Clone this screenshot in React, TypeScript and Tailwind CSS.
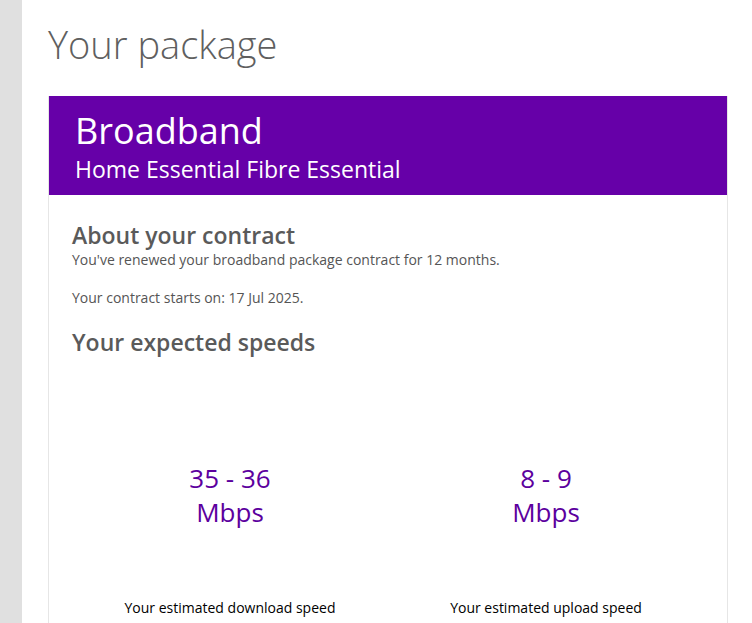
const speeds = [
  { range: "35 - 36", label: "Your estimated download speed" },
  { range: "8 - 9", label: "Your estimated upload speed" },
];

const App = () => {
  return (
    <div className="flex min-h-screen bg-white font-['Open_Sans',sans-serif]">
      <aside className="w-[22px] shrink-0 bg-[#e0e0e0]" />

      <main className="flex-1 pl-[26px] pt-[20px]">
        <h1 className="text-[38px] font-light leading-[48px] text-[#5f5f5f]">Your package</h1>

        <section className="mt-[28px] w-[680px] border-x border-[#e6e6e6]">
          <div className="h-[99px] bg-[#6600a8] px-[26px] pt-[13px] text-white">
            <h2 className="text-[36px] leading-[44px]">Broadband</h2>
            <p className="text-[23px] leading-[32px]">Home Essential Fibre Essential</p>
          </div>

          <div className="px-[23px] pt-[24px] pb-[10px]">
            <h3 className="text-[23px] font-semibold leading-[32px] text-[#5a5a5a]">About your contract</h3>
            <p className="text-[14px] leading-[18px] text-[#555]">
              You've renewed your broadband package contract for 12 months.
            </p>
            <p className="mt-[20px] text-[14px] leading-[18px] text-[#555]">
              Your contract starts on: 17 Jul 2025.
            </p>
            <h3 className="mt-[19px] text-[23px] font-semibold leading-[32px] text-[#5a5a5a]">
              Your expected speeds
            </h3>

            <div className="mt-[103px] grid grid-cols-2">
              {speeds.map((s) => (
                <div key={s.label} className="flex flex-col items-center">
                  <div className="text-[26px] leading-[34px] text-[#5c009e]">{s.range}</div>
                  <div className="text-[26px] leading-[34px] text-[#5c009e]">Mbps</div>
                  <div className="mt-[68px] text-[14px] text-black">{s.label}</div>
                </div>
              ))}
            </div>
          </div>
        </section>
      </main>
    </div>
  );
};

export default App;
